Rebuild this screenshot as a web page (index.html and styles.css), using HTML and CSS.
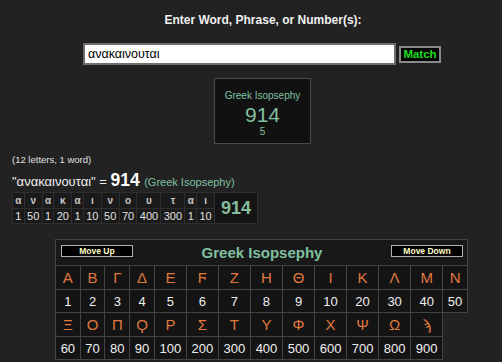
FILE: index.html
```html
<!DOCTYPE html>
<html>
<head>
<meta charset="utf-8">
<link rel="stylesheet" href="styles.css">
</head>
<body>
<div class="title">Enter Word, Phrase, or Number(s):</div>
<div class="form">
  <input class="field" type="text" value="ανακαινουται">
  <div class="match">Match</div>
</div>
<div class="box">
  <div class="bname">Greek Isopsephy</div>
  <div class="bval">914</div>
  <div class="bsub">5</div>
</div>
<div class="info">(12 letters, 1 word)</div>
<div class="eq"><span class="q">"ανακαινουται" = </span><b class="num">914</b> <span class="ciph">(Greek Isopsephy)</span></div>
<table class="bd">
  <tr class="bl"><td>α</td><td>ν</td><td>α</td><td>κ</td><td>α</td><td>ι</td><td>ν</td><td>ο</td><td>υ</td><td>τ</td><td>α</td><td>ι</td><td class="tot" rowspan="2">914</td></tr>
  <tr class="bn"><td>1</td><td>50</td><td>1</td><td>20</td><td>1</td><td>10</td><td>50</td><td>70</td><td>400</td><td>300</td><td>1</td><td>10</td></tr>
</table>
<table class="chart">
  <tr><td class="head" colspan="14"><div class="hrow"><span class="btn">Move Up</span><span class="ctitle">Greek Isopsephy</span><span class="btn">Move Down</span></div></td></tr>
  <tr class="let"><td>Α</td><td>Β</td><td>Γ</td><td>Δ</td><td>Ε</td><td>Ϝ</td><td>Ζ</td><td>Η</td><td>Θ</td><td>Ι</td><td>Κ</td><td>Λ</td><td>Μ</td><td>Ν</td></tr>
  <tr class="val"><td>1</td><td>2</td><td>3</td><td>4</td><td>5</td><td>6</td><td>7</td><td>8</td><td>9</td><td>10</td><td>20</td><td>30</td><td>40</td><td>50</td></tr>
  <tr class="let"><td>Ξ</td><td>Ο</td><td>Π</td><td>Ϙ</td><td>Ρ</td><td>Σ</td><td>Τ</td><td>Υ</td><td>Φ</td><td>Χ</td><td>Ψ</td><td>Ω</td><td>ϡ</td></tr>
  <tr class="val"><td>60</td><td>70</td><td>80</td><td>90</td><td>100</td><td>200</td><td>300</td><td>400</td><td>500</td><td>600</td><td>700</td><td>800</td><td>900</td></tr>
</table>
</body>
</html>
```
FILE: styles.css
```css
html, body {
  margin: 0;
  padding: 0;
  background: #222222;
  font-family: "Liberation Sans", Arial, sans-serif;
  color: #eeeeee;
}
.title {
  margin-top: 13px;
  padding-left: 24px;
  text-align: center;
  font-weight: bold;
  font-size: 12px;
  line-height: 14px;
  color: #f0f0f0;
}
.form {
  display: flex;
  align-items: center;
  gap: 3px;
  margin: 16px 0 0 83px;
}
.field {
  box-sizing: border-box;
  width: 313px;
  height: 22px;
  margin: 0;
  padding: 0 3px;
  border: 2px solid #6e6e6e;
  background: #ffffff;
  color: #000000;
  font-family: "Liberation Sans", sans-serif;
  font-size: 12.5px;
  outline: none;
}
.match {
  box-sizing: border-box;
  width: 42px;
  height: 17px;
  border: 2px solid #8a8a8a;
  background: #000000;
  color: #22dd22;
  font-weight: bold;
  font-size: 11.5px;
  line-height: 13px;
  text-align: center;
}
.box {
  box-sizing: border-box;
  width: 97px;
  height: 66px;
  margin: 13px 0 0 214px;
  border: 1px solid #4a4a4a;
  background: #111111;
  text-align: center;
  color: #80c0a0;
  padding-top: 11px;
}
.bname {
  font-size: 10px;
  line-height: 12px;
}
.bval {
  font-size: 21px;
  line-height: 22px;
  margin-top: 2px;
}
.bsub {
  font-size: 10px;
  line-height: 12px;
}
.info {
  margin: 10px 0 0 12px;
  font-size: 9.5px;
  line-height: 12px;
  color: #e0e0e0;
}
.eq {
  margin: 4px 0 0 12px;
  line-height: 20px;
  white-space: nowrap;
}
.q {
  font-size: 13px;
  color: #eeeeee;
}
.num {
  font-size: 17.5px;
  color: #ffffff;
}
.ciph {
  font-size: 11px;
  color: #80c0a0;
}
.bd {
  margin: 0 0 0 12px;
  border-collapse: collapse;
  background: #1a1a1a;
}
.bd td {
  border: 1px solid #2e2e2e;
  padding: 0 2.3px;
  text-align: center;
  height: 14px;
  font-size: 11px;
  line-height: 13px;
  color: #e0e0e0;
}
.bd .bl td {
  height: 15px;
  font-size: 10px;
  font-weight: bold;
  color: #c8c8c8;
}
.bd td.tot {
  background: #141414;
  font-size: 18px;
  font-weight: bold;
  color: #86bc9c;
  padding: 0 6px;
}
.chart {
  width: 413px;
  margin: 15px 0 0 55px;
  border-collapse: collapse;
}
.chart td {
  border: 1px solid #444444;
  background: #141414;
  text-align: center;
  padding: 0 4.5px;
}
.chart td.head {
  height: 25px;
  padding: 0 4px 0 5px;
  background: #181818;
}
.hrow {
  display: flex;
  justify-content: space-between;
  align-items: flex-start;
  height: 25px;
}
.btn {
  box-sizing: border-box;
  width: 72px;
  height: 12px;
  margin-top: 5px;
  border: 1px solid #b0b0b0;
  background: #000000;
  color: #ffffc8;
  font-size: 8.5px;
  font-weight: bold;
  line-height: 10px;
  text-align: center;
}
.ctitle {
  font-weight: bold;
  font-size: 15px;
  line-height: 25px;
  color: #80c0a0;
}
.chart .let td {
  height: 23px;
  font-size: 15px;
  color: #e07a3e;
}
.chart .val td {
  height: 22px;
  font-size: 13px;
  color: #f0f0f0;
}
```
